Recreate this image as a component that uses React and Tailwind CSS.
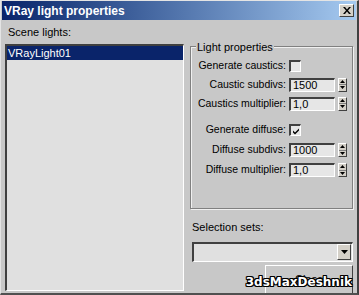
const sunken =
  "border-t-2 border-l-2 border-t-[#404040] border-l-[#404040] border-b border-r border-b-white border-r-white";

function Spinner() {
  return (
    <div className="ml-[3px] flex h-[14px] w-[9px] flex-col border border-t-white border-l-white border-b-[#404040] border-r-[#404040] bg-[#d4d0c8]">
      <div className="flex flex-1 items-center justify-center border-b border-b-[#808080]">
        <svg width="5" height="3" viewBox="0 0 5 3">
          <path d="M2.5 0 L5 3 L0 3 Z" fill="#000" />
        </svg>
      </div>
      <div className="flex flex-1 items-center justify-center">
        <svg width="5" height="3" viewBox="0 0 5 3">
          <path d="M0 0 L5 0 L2.5 3 Z" fill="#000" />
        </svg>
      </div>
    </div>
  );
}

function Row({ label, children, tall }) {
  return (
    <div className={`flex items-center ${tall ? "h-[20px]" : "h-[19px]"}`}>
      <div className="w-[95px] text-right whitespace-nowrap">{label}</div>
      <div className="ml-[3px] flex items-center">{children}</div>
    </div>
  );
}

function NumberField({ value }) {
  return (
    <div className="flex items-center">
      <div className={`flex h-[14px] w-[46px] items-center bg-[#e6e6e6] pl-[2px] text-[11px] leading-none ${sunken}`}>
        {value}
      </div>
      <Spinner />
    </div>
  );
}

function CheckBox({ checked }) {
  return (
    <div className={`flex h-[12px] w-[12px] items-center justify-center bg-[#e6e6e6] ${sunken}`}>
      {checked && (
        <svg width="8" height="8" viewBox="0 0 8 8">
          <path d="M1 3.5 L3 5.5 L7 1.5 L7 3.5 L3 7.5 L1 5.5 Z" fill="#000" />
        </svg>
      )}
    </div>
  );
}

export default function App() {
  return (
    <div className="relative flex h-[295px] w-[359px] flex-col overflow-hidden border-t border-l border-t-[#e4e4e4] border-l-[#e4e4e4] border-r-2 border-b-2 border-r-[#404040] border-b-[#505050] bg-[#c8c8c8] font-['Liberation_Sans',Arial,sans-serif] text-[10.5px] text-black">
      <div className="mx-[1px] mt-[0px] flex h-[19px] shrink-0 items-center justify-between bg-gradient-to-r from-[#0a246a] to-[#a6caf0] pl-[2px] pr-[2px]">
        <span className="text-[12px] font-bold text-white">VRay light properties</span>
        <div className="flex h-[13px] w-[15px] items-center justify-center border border-t-white border-l-white border-b-[#404040] border-r-[#404040] bg-[#d4d0c8]">
          <svg width="8" height="7" viewBox="0 0 8 7">
            <path d="M0 0 L2 0 L4 2.5 L6 0 L8 0 L5 3.5 L8 7 L6 7 L4 4.5 L2 7 L0 7 L3 3.5 Z" fill="#000" />
          </svg>
        </div>
      </div>

      <div className="flex flex-1 pl-[4px]">
        <div className="flex w-[179px] flex-col">
          <div className="flex h-[24px] items-center pl-[3px] text-[11px]">Scene lights:</div>
          <div className={`mb-[4px] flex-1 bg-[#e0e0e0] ${sunken}`}>
            <div className="flex h-[14px] items-center bg-[#0a246a] pl-[1px] text-[11px] text-white">VRayLight01</div>
          </div>
        </div>

        <div className="ml-[6px] flex w-[163px] flex-col">
          <div className="relative mt-[26px] h-[163px] border border-[#808080] shadow-[inset_1px_1px_0_#f0f0f0,1px_1px_0_#f0f0f0]">
            <span className="absolute -top-[8px] left-[5px] bg-[#c8c8c8] px-[1px] text-[11px]">Light properties</span>
            <div className="flex flex-col pt-[9px]">
              <Row label="Generate caustics:">
                <CheckBox />
              </Row>
              <Row label="Caustic subdivs:">
                <NumberField value="1500" />
              </Row>
              <Row label="Caustics multiplier:">
                <NumberField value="1,0" />
              </Row>
              <div className="h-[7px]" />
              <Row label="Generate diffuse:" tall>
                <CheckBox checked />
              </Row>
              <Row label="Diffuse subdivs:" tall>
                <NumberField value="1000" />
              </Row>
              <Row label="Diffuse multiplier:" tall>
                <NumberField value="1,0" />
              </Row>
            </div>
          </div>

          <div className="mt-[10px] pl-[2px] text-[11px]">Selection sets:</div>
          <div className={`ml-[2px] mt-[6px] flex h-[20px] items-center justify-end bg-[#e0e0e0] pr-[1px] ${sunken}`}>
            <div className="flex h-[16px] w-[14px] items-center justify-center border border-t-white border-l-white border-b-[#404040] border-r-[#404040] bg-[#d4d0c8]">
              <svg width="7" height="4" viewBox="0 0 7 4">
                <path d="M0 0 L7 0 L3.5 4 Z" fill="#000" />
              </svg>
            </div>
          </div>

          <div className="ml-[75px] mt-[3px] flex h-[30px] w-[88px] items-start justify-center border border-t-white border-l-white border-r-[#404040] bg-[#c8c8c8] pt-[5px] text-[11px]">
            Close
          </div>
        </div>
      </div>

      <div className="absolute right-[5px] bottom-[5px] font-['DejaVu_Sans',sans-serif] text-[12px] font-bold leading-none text-white [text-shadow:1px_0_0_#000,-1px_0_0_#000,0_1px_0_#000,0_-1px_0_#000,1px_1px_0_#000,-1px_-1px_0_#000,1px_-1px_0_#000,-1px_1px_0_#000]">
        3dsMaxDeshnik
      </div>
    </div>
  );
}
